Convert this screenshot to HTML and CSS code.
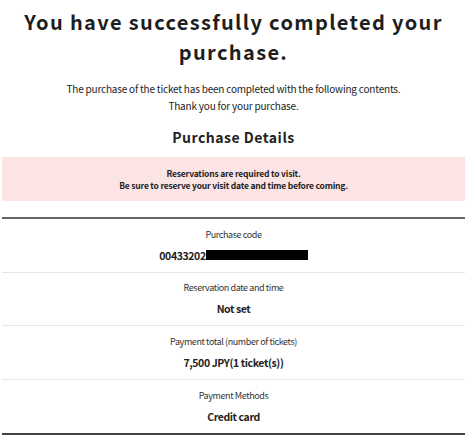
FILE: index.html
```html
<!DOCTYPE html>
<html lang="en">
<head>
    <meta charset="UTF-8">
    <meta name="viewport" content="width=device-width, initial-scale=1.0">
    <title>Purchase Complete</title>

    <link rel="stylesheet" href="styles.css">
</head>
<body>
    <h1>You have successfully completed your purchase.</h1>

    <div class="lead">
        <p>The purchase of the ticket has been completed with the following contents.</p>
        <p>Thank you for your purchase.</p>
    </div>

    <h2>Purchase Details</h2>

    <div class="notice">
        <p>Reservations are required to visit.</p>
        <p>Be sure to reserve your visit date and time before coming.</p>
    </div>

    <dl class="details">
        <div class="row">
            <dt>Purchase code</dt>
            <dd>00433202<span class="redacted"></span></dd>
        </div>
        <div class="row">
            <dt>Reservation date and time</dt>
            <dd>Not set</dd>
        </div>
        <div class="row">
            <dt>Payment total (number of tickets)</dt>
            <dd>7,500 JPY(1 ticket(s))</dd>
        </div>
        <div class="row">
            <dt>Payment Methods</dt>
            <dd>Credit card</dd>
        </div>
    </dl>
</body>
</html>
```

FILE: styles.css
```css
body {
    background-color: #fff;
    font-family: "Noto Sans CJK JP", "Noto Sans", sans-serif;
    color: #222;
    text-align: center;
    margin: 0;
    padding: 0 3px 0 2px;
}

h1 {
    font-size: 20px;
    font-weight: 700;
    letter-spacing: 1.35px;
    line-height: 30px;
    margin: 7px 10px 0;
    color: #1e1e1e;
}

.lead {
    margin-top: 13px;
    font-size: 10px;
    letter-spacing: -0.2px;
    line-height: 17px;
}

.lead p {
    margin: 0;
}

h2 {
    font-size: 14px;
    font-weight: 700;
    letter-spacing: 0.5px;
    margin: 12px 0 0;
    line-height: 22px;
}

.notice {
    background-color: #fde4e4;
    margin-top: 9px;
    padding: 10px 0 10px;
    font-size: 8.5px;
    font-weight: 700;
    letter-spacing: -0.2px;
    line-height: 12px;
}

.notice p {
    margin: 0;
}

.details {
    margin: 16px 0 0;
    border-top: 2px solid #666;
    border-bottom: 2px solid #444;
}

.row {
    box-sizing: border-box;
    height: 53.5px;
    display: flex;
    flex-direction: column;
    align-items: center;
    justify-content: center;
    gap: 7px;
    border-bottom: 1px solid #e6e6e6;
}

.row:last-child {
    border-bottom: none;
}

dt {
    font-size: 9px;
    letter-spacing: -0.4px;
    color: #333;
}

dd {
    margin: 0;
    font-size: 10.5px;
    font-weight: 700;
    letter-spacing: -0.4px;
    display: flex;
    align-items: center;
}

.redacted {
    display: inline-block;
    width: 102px;
    height: 10px;
    background-color: #000;
}
```
